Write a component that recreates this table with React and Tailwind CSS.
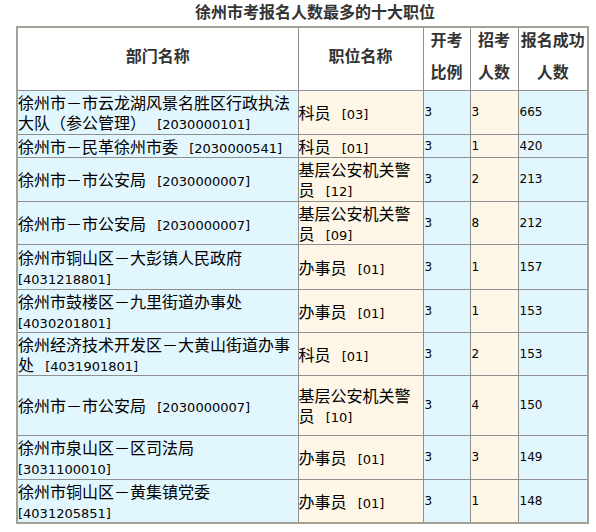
import React from 'react';

// 徐州市考报名人数最多的十大职位
const rows = [
  { dept: '徐州市－市云龙湖风景名胜区行政执法大队（参公管理）', deptCode: '2030000101', job: '科员', jobCode: '03', ratio: 3, plan: 3, count: 665, h: 'h-[44px]' },
  { dept: '徐州市－民革徐州市委', deptCode: '2030000541', job: '科员', jobCode: '01', ratio: 3, plan: 1, count: 420, h: 'h-[23px]' },
  { dept: '徐州市－市公安局', deptCode: '2030000007', job: '基层公安机关警员', jobCode: '12', ratio: 3, plan: 2, count: 213, h: 'h-[44px]' },
  { dept: '徐州市－市公安局', deptCode: '2030000007', job: '基层公安机关警员', jobCode: '09', ratio: 3, plan: 8, count: 212, h: 'h-[43px]' },
  { dept: '徐州市铜山区－大彭镇人民政府', deptCode: '4031218801', job: '办事员', jobCode: '01', ratio: 3, plan: 1, count: 157, h: 'h-[45px]' },
  { dept: '徐州市鼓楼区－九里街道办事处', deptCode: '4030201801', job: '办事员', jobCode: '01', ratio: 3, plan: 1, count: 153, h: 'h-[43px]' },
  { dept: '徐州经济技术开发区－大黄山街道办事处', deptCode: '4031901801', job: '科员', jobCode: '01', ratio: 3, plan: 2, count: 153, h: 'h-[43px]' },
  { dept: '徐州市－市公安局', deptCode: '2030000007', job: '基层公安机关警员', jobCode: '10', ratio: 3, plan: 4, count: 150, h: 'h-[60px]' },
  { dept: '徐州市泉山区－区司法局', deptCode: '3031100010', job: '办事员', jobCode: '01', ratio: 3, plan: 3, count: 149, h: 'h-[44px]' },
  { dept: '徐州市铜山区－黄集镇党委', deptCode: '4031205851', job: '办事员', jobCode: '01', ratio: 3, plan: 1, count: 148, h: 'h-[44px]' },
];

const Code = ({ value }) => (
  <>
    {'\u2002\u2009'}
    <span className="font-['DejaVu_Sans'] text-[13px] leading-none">[{value}]</span>
  </>
);

const cell = 'border border-[#8f8f8f] p-0 align-middle text-left';
const num = "border border-[#8f8f8f] p-0 pl-px align-middle text-left font-['DejaVu_Sans'] text-[12px] leading-none";
const head = 'border border-[#8f8f8f] p-0 pb-[8px] align-middle text-center bg-white font-bold text-[#333]';

const App = () => {
  return (
    <div className="w-[596px] h-[532px] bg-white pt-px font-['Noto_Sans_CJK_SC',sans-serif] text-[16px] leading-[20px] text-black">
      <div className="ml-[195px] h-[25px] font-bold text-[#333]">徐州市考报名人数最多的十大职位</div>

      <table className="ml-[16px] w-[571px] table-fixed border-collapse border-2 border-[#a3a193]">
        <colgroup>
          <col className="w-[281px]" />
          <col className="w-[125px]" />
          <col className="w-[47px]" />
          <col className="w-[48px]" />
          <col className="w-[70px]" />
        </colgroup>
        <thead>
          <tr className="h-[63px]">
            <th className={head}>部门名称</th>
            <th className={head}>职位名称</th>
            <th className={head}>
              <div className="flex flex-col gap-[12px]">
                <span>开考</span>
                <span>比例</span>
              </div>
            </th>
            <th className={head}>
              <div className="flex flex-col gap-[12px]">
                <span>招考</span>
                <span>人数</span>
              </div>
            </th>
            <th className={head}>
              <div className="flex flex-col gap-[12px]">
                <span>报名成功</span>
                <span>人数</span>
              </div>
            </th>
          </tr>
        </thead>
        <tbody>
          {rows.map((r, i) => (
            <tr key={i} className={r.h}>
              <td className={`${cell} bg-[#e2f6fe]`}>
                {r.dept}
                <Code value={r.deptCode} />
              </td>
              <td className={`${cell} bg-[#fef6e6]`}>
                {r.job}
                <Code value={r.jobCode} />
              </td>
              <td className={`${num} bg-[#e2f6fe]`}>{r.ratio}</td>
              <td className={`${num} bg-[#fef6e6]`}>{r.plan}</td>
              <td className={`${num} bg-[#e2f6fe]`}>{r.count}</td>
            </tr>
          ))}
        </tbody>
      </table>
    </div>
  );
};

export default App;
